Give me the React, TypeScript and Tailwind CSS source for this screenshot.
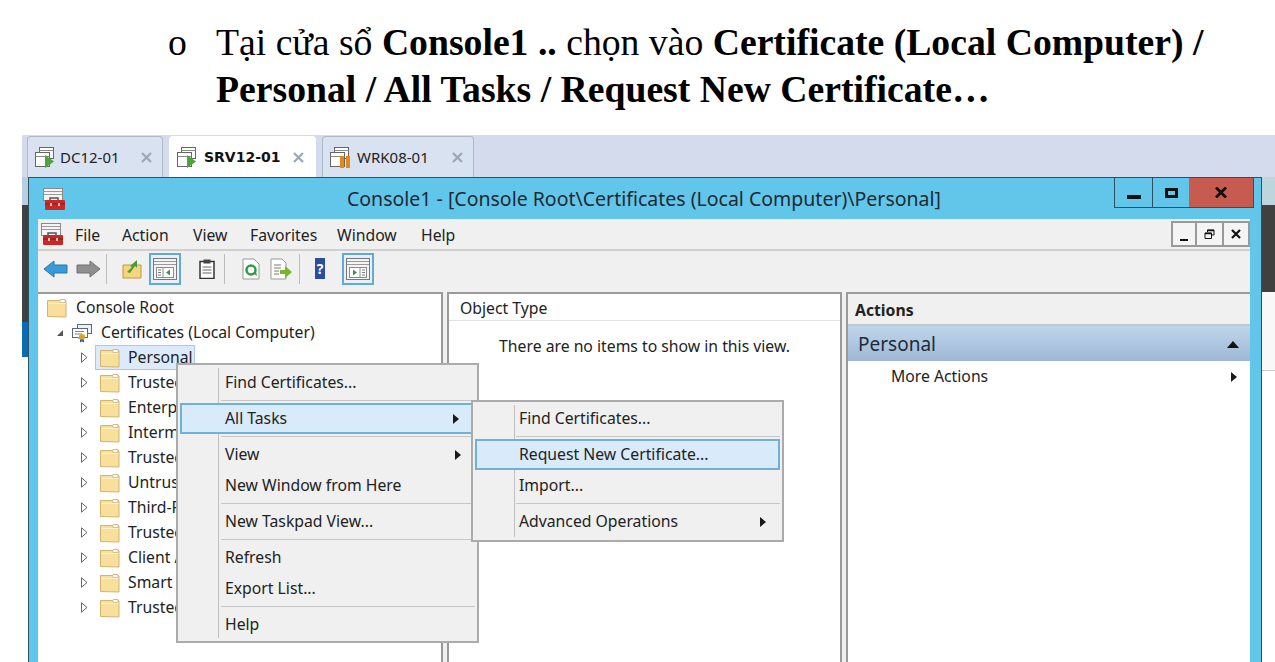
import type { ReactNode } from 'react';

function VmIcon({ state }: { state: 'run' | 'pause' }) {
  return (
    <svg width="24" height="24" viewBox="0 0 24 24" className="shrink-0">
      <rect x="6.5" y="2.5" width="14" height="11" fill="#fff" stroke="#666" />
      <rect x="2.5" y="7.5" width="14" height="14" fill="#fff" stroke="#666" />
      <path d="M2.5 11.5h14M6.5 5.5h14" stroke="#888" />
      {state === 'run' ? (
        <path d="M12 10l9 6.5-9 6.5z" fill="#4aa63a" />
      ) : (
        <path d="M12 11h4v12h-4zM18 11h4v12h-4z" fill="#e08a1e" />
      )}
    </svg>
  );
}

function MmcIcon() {
  return (
    <svg width="24" height="24" viewBox="0 0 24 24" className="shrink-0">
      <rect x="1.5" y="1.5" width="19" height="12" fill="#f4f4f4" stroke="#8a8a8a" />
      <path d="M2 4.5h18M2 7.5h18" stroke="#9a9a9a" />
      <path d="M8 14v-3h8v3" fill="none" stroke="#555" strokeWidth="1.5" />
      <rect x="3" y="13" width="20" height="10" rx="1" fill="#c8282c" />
      <path d="M3 17h20" stroke="#8e1518" />
      <path d="M8 16h2v3H8zM16 16h2v3h-2z" fill="#f2d0a0" />
    </svg>
  );
}

function Folder() {
  return (
    <svg width="20" height="20" viewBox="0 0 20 20" className="shrink-0">
      <path d="M.5 18.5V2.5h12l1-1h4l1.500 1.500v16z" fill="#f8df9c" stroke="#d2b46e" />
      <path d="M1.500 5.500h17" stroke="#fff3cc" />
      <path d="M13 1.500h5v3h-5z" fill="#fff" stroke="#c6b07c" strokeWidth=".7" />
    </svg>
  );
}

function CertStore() {
  return (
    <svg width="22" height="20" viewBox="0 0 22 20" className="shrink-0">
      <rect x="6.500" y="1.500" width="14" height="9" fill="#eef2f6" stroke="#59697a" />
      <rect x="1.500" y="5.500" width="15" height="9" fill="#fff" stroke="#59697a" />
      <path d="M4 8.500h9M4 11h7" stroke="#7a8794" />
      <path d="M7 14h6v2H7z" fill="#9aa6b2" />
      <circle cx="11" cy="14" r="3" fill="#e0a020" />
      <path d="M9 16.500v3l2-1 2 1v-3" fill="#2f62b8" />
    </svg>
  );
}

function Expand() {
  return (
    <svg width="7" height="11" viewBox="0 0 7 11" className="shrink-0">
      <path d="M.5.800l5.500 4.700-5.500 4.700z" fill="#fff" stroke="#666" />
    </svg>
  );
}

function Caret() {
  return (
    <svg width="6" height="10" viewBox="0 0 6 10" className="shrink-0">
      <path d="M0 0l6 5-6 5z" fill="#1a1a1a" />
    </svg>
  );
}

function TabClose() {
  return (
    <svg width="11" height="11" viewBox="0 0 11 11" className="shrink-0">
      <path d="M1 1l9 9M10 1l-9 9" stroke="#9aa7b8" strokeWidth="2.200" />
    </svg>
  );
}

function Tab({ name, state, active, className }: { name: string; state: 'run' | 'pause'; active?: boolean; className: string }) {
  return (
    <div
      className={`flex items-center h-[41px] rounded-t-[4px] border border-b-0 pl-[5px] ${
        active ? 'bg-white border-white' : 'bg-[#d9e2f1] border-[#aeb9cc]'
      } ${className}`}
    >
      <VmIcon state={state} />
      <span
        className={
          active
            ? "flex-1 font-['DejaVu_Sans',sans-serif] text-[14px] font-bold text-[#111]"
            : 'flex-1 text-[15px] text-[#222]'
        }
      >
        {name}
      </span>
      <TabClose />
    </div>
  );
}

function ToolButton({ children, className }: { children: ReactNode; className: string }) {
  return <div className={`flex items-center justify-center shrink-0 ${className}`}>{children}</div>;
}

function PaneToggle({ flip }: { flip?: boolean }) {
  return (
    <svg width="24" height="22" viewBox="0 0 24 22">
      <rect x=".5" y=".5" width="23" height="21" fill="#f4f4f4" stroke="#777" />
      <path d="M1 3.500h22M1 6.500h22" stroke="#999" />
      <rect x="3.500" y="9.500" width="17" height="10" fill="#fff" stroke="#8a8a8a" />
      <path d={flip ? 'M14 10v9' : 'M10 10v9'} stroke="#8a8a8a" />
      <path d={flip ? 'M7 11.500l4 3-4 3z' : 'M17 11.500l-4 3 4 3z'} fill="#2f9a4a" />
      <path d={flip ? 'M16 12h3M16 14.500h3M16 17h3' : 'M5 12h3M5 14.500h3M5 17h3'} stroke="#777" />
    </svg>
  );
}

function TreeRow({ label, active }: { label: string; active?: boolean }) {
  return (
    <div className="flex items-center h-[25px] pl-[43px]">
      <Expand />
      <div
        className={`flex items-center h-[25px] ml-[7px] pl-[4px] pr-[1px] gap-[8px] border whitespace-nowrap ${
          active ? 'bg-[#dcebfb] border-[#a9c9ea]' : 'border-transparent'
        }`}
      >
        <Folder />
        <span>{label}</span>
      </div>
    </div>
  );
}

function MenuItem({ label, arrow, active, pad }: { label: string; arrow?: boolean; active?: boolean; pad: string }) {
  return (
    <div
      className={`relative flex items-center h-[31px] pr-[14px] ${pad} ${
        active ? 'border-2 border-[#6db2dc] bg-[#d9eafb]' : ''
      }`}
    >
      <span className="flex-1">{label}</span>
      {arrow && <Caret />}
    </div>
  );
}

function MenuSep({ className, inset }: { className: string; inset: string }) {
  return (
    <div className={`flex items-center ${className} ${inset}`}>
      <div className="h-px w-full bg-[#c6c6c6]" />
    </div>
  );
}

const treeItems = [
  'Personal',
  'Trusted Root Certification Authorities',
  'Enterprise Trust',
  'Intermediate Certification Authorities',
  'Trusted Publishers',
  'Untrusted Certificates',
  'Third-Party Root Certification Authorities',
  'Trusted People',
  'Client Authentication Issuers',
  'Smart Card Trusted Roots',
  'Trusted Devices',
];

export default function App() {
  return (
    <div className="relative flex flex-col w-[1275px] h-[662px] overflow-hidden bg-white font-['Noto_Sans',sans-serif] text-[15.75px] text-[#222]">
      {/* document text above the screenshot */}
      <div className="flex h-[135px] shrink-0 pl-[168px] pt-[19px] font-['Liberation_Serif',serif] text-[37.7px] leading-[47px] text-black">
        <span className="w-[48px] shrink-0">o</span>
        <p>
          Tại cửa sổ <b>Console1 ..</b> chọn vào <b>Certificate (Local Computer) /</b>
          <br />
          <b>Personal / All Tasks / Request New Certificate…</b>
        </p>
      </div>

      <div className="flex flex-col flex-1 min-h-0 ml-[22px]">
        {/* hypervisor tabs */}
        <div className="flex items-end gap-[6px] h-[42px] shrink-0 pl-[5px] bg-[#d3dbec]">
          <Tab name="DC12-01" state="run" className="w-[136px] gap-[3px] pr-[10px]" />
          <Tab name="SRV12-01" state="run" active className="w-[147px] gap-[5px] pr-[11px]" />
          <Tab name="WRK08-01" state="pause" className="w-[152px] gap-[5px] pr-[10px]" />
        </div>

        <div className="flex flex-1 min-h-0">
          <div className="flex flex-col w-[6px] shrink-0">
            <div className="h-[28px] bg-[#b9cfe0]" />
            <div className="h-[117px] bg-[#404040]" />
            <div className="h-[35px] bg-[#0a6bb5]" />
          </div>

          {/* console window */}
          <div className="flex flex-col w-[1234px] shrink-0 border border-b-0 border-[#2f4f63] bg-[#62c6ea]">
            <div className="relative flex items-center h-[41px] shrink-0 pl-[13px]">
              <MmcIcon />
              <div className="absolute left-[318px] top-[7px] text-[19.5px] leading-[28px] text-[#1c2a33] whitespace-nowrap">
                Console1 - [Console Root\Certificates (Local Computer)\Personal]
              </div>
              <div className="absolute right-[7px] top-0 flex h-[30px] border border-t-0 border-[#2f4f63]">
                <div className="flex items-end justify-center w-[38px] border-r border-[#2f4f63] pb-[8px]">
                  <div className="w-[14px] h-[4px] bg-[#111]" />
                </div>
                <div className="flex items-center justify-center w-[36px]">
                  <div className="w-[13px] h-[10px] border-[3px] border-[#111]" />
                </div>
                <div className="flex items-center justify-center w-[64px] bg-[#c75b50]">
                  <svg width="12" height="11" viewBox="0 0 12 11">
                    <path d="M1 .5l10 10M11 .5l-10 10" stroke="#111" strokeWidth="2.800" />
                  </svg>
                </div>
              </div>
            </div>

            <div className="flex flex-col flex-1 min-h-0 mx-[9px] mr-[11px] bg-[#f0f0f0]">
              {/* menu bar */}
              <div className="flex items-center h-[32px] shrink-0 border-b-2 border-[#cfcfcf] pl-[2px]">
                <MmcIcon />
                <span className="ml-[11px] w-[47px] mt-[3px]">File</span>
                <span className="w-[71px] mt-[3px]">Action</span>
                <span className="w-[57px] mt-[3px]">View</span>
                <span className="w-[87px] mt-[3px]">Favorites</span>
                <span className="w-[84px] mt-[3px]">Window</span>
                <span className="mt-[3px]">Help</span>
                <div className="flex h-[26px] ml-auto bg-[#f4f4f4]">
                  <div className="flex items-end justify-center w-[26px] border-2 border-[#9a9a9a] pb-[4px]">
                    <div className="w-[8px] h-[2px] bg-[#111]" />
                  </div>
                  <div className="flex items-center justify-center w-[27px] border-y-2 border-r-2 border-[#9a9a9a]">
                    <svg width="11" height="11" viewBox="0 0 11 11">
                      <path d="M3.500 3V1h6.500v5H8M1 4h6.500v5.500H1z" fill="none" stroke="#111" />
                      <path d="M3 1.500h7M1 4.500h6.500" stroke="#111" strokeWidth="1.500" />
                    </svg>
                  </div>
                  <div className="flex items-center justify-center w-[26px] border-y-2 border-r-2 border-[#9a9a9a]">
                    <svg width="10" height="10" viewBox="0 0 10 10">
                      <path d="M1 1l8 8M9 1l-8 8" stroke="#111" strokeWidth="2.200" />
                    </svg>
                  </div>
                </div>
              </div>

              {/* toolbar */}
              <div className="flex items-center h-[41px] shrink-0 pl-[6px] pb-[6px]">
                <ToolButton className="w-[24px]">
                  <svg width="24" height="18" viewBox="0 0 24 18">
                    <path d="M0 9l10-8v4h13v8H10v4z" fill="#3b9ad8" stroke="#2478b0" />
                  </svg>
                </ToolButton>
                <ToolButton className="w-[24px] ml-[8px]">
                  <svg width="24" height="18" viewBox="0 0 24 18">
                    <path d="M24 9l-10-8v4H1v8h13v4z" fill="#8f8f8f" stroke="#707070" />
                  </svg>
                </ToolButton>
                <div className="w-px h-[30px] ml-[6px] bg-[#bdbdbd]" />
                <ToolButton className="w-[20px] ml-[15px]">
                  <svg width="20" height="20" viewBox="0 0 20 20">
                    <path d="M1 19V6h18v13z" fill="#f4d67c" stroke="#c09a40" />
                    <path d="M5 13l5-5-2-1 7-6v8l-2-2-5 7z" fill="#4e9a3c" />
                  </svg>
                </ToolButton>
                <ToolButton className="w-[32px] h-[32px] ml-[7px] border-2 border-[#62a9d6] bg-[#e6f1fb]">
                  <PaneToggle />
                </ToolButton>
                <ToolButton className="w-[18px] ml-[17px]">
                  <svg width="16" height="20" viewBox="0 0 16 20">
                    <rect x="1" y="2.500" width="14" height="17" fill="#fff" stroke="#333" strokeWidth="1.500" />
                    <rect x="4.500" y=".5" width="7" height="4" fill="#444" />
                    <path d="M3.500 8h9M3.500 11h9M3.500 14h9" stroke="#666" />
                  </svg>
                </ToolButton>
                <div className="w-px h-[30px] ml-[8px] bg-[#bdbdbd]" />
                <ToolButton className="w-[20px] ml-[16px]">
                  <svg width="20" height="22" viewBox="0 0 20 22">
                    <path d="M2 1h11l5 5v15H2z" fill="#fff" stroke="#999" />
                    <circle cx="10" cy="12" r="4.500" fill="none" stroke="#2f9a4a" strokeWidth="2.500" />
                    <path d="M12 15l4 3-1-5z" fill="#2f9a4a" />
                  </svg>
                </ToolButton>
                <ToolButton className="w-[22px] ml-[9px]">
                  <svg width="22" height="22" viewBox="0 0 22 22">
                    <path d="M1 1h11l4 4v16H1z" fill="#fff" stroke="#999" />
                    <path d="M4 7h7M4 10h7M4 13h5M4 16h5" stroke="#777" />
                    <path d="M10 12h5V8l7 6-7 6v-4h-5z" fill="#76b82a" />
                  </svg>
                </ToolButton>
                <div className="w-px h-[30px] ml-[7px] bg-[#bdbdbd]" />
                <ToolButton className="w-[10px] ml-[15px]">
                  <div className="flex items-center justify-center w-[10px] h-[21px] bg-[#2b4ea0] text-[14px] font-bold leading-none text-white">
                    ?
                  </div>
                </ToolButton>
                <ToolButton className="w-[32px] h-[32px] ml-[17px] border-2 border-[#62a9d6] bg-[#e6f1fb]">
                  <PaneToggle flip />
                </ToolButton>
              </div>

              {/* panes */}
              <div className="flex flex-1 min-h-0">
                <div className="w-[405px] shrink-0 border-t-2 border-r-2 border-[#9a9a9a] bg-white overflow-hidden pt-[1px]">
                  <div className="flex items-center h-[25px] pl-[9px] gap-[9px]">
                    <Folder />
                    <span>Console Root</span>
                  </div>
                  <div className="flex items-center h-[25px] pl-[18px]">
                    <svg width="8" height="8" viewBox="0 0 8 8" className="shrink-0">
                      <path d="M7 1v6H1z" fill="#555" />
                    </svg>
                    <span className="ml-[7px]">
                      <CertStore />
                    </span>
                    <span className="ml-[8px]">Certificates (Local Computer)</span>
                  </div>
                  {treeItems.map((item, i) => (
                    <TreeRow key={item} label={item} active={i === 0} />
                  ))}
                </div>

                <div className="w-[395px] shrink-0 ml-[4px] border-2 border-b-0 border-[#9a9a9a] bg-white">
                  <div className="flex items-center h-[27px] border-b border-[#e2e2e2] pl-[11px] pt-[3px]">Object Type</div>
                  <div className="pt-[14px] text-center">There are no items to show in this view.</div>
                </div>

                <div className="flex-1 min-w-0 ml-[4px] border-l-2 border-t-2 border-[#9a9a9a]">
                  <div className="flex items-center h-[32px] border-b-2 border-[#c8c8c8] pl-[7px] pt-[3px] font-bold">Actions</div>
                  <div className="flex items-center justify-between h-[35px] pl-[10px] pr-[11px] pt-[2px] bg-gradient-to-b from-[#bfd5ec] to-[#9db8d4] text-[19px] text-[#1d2b3a]">
                    Personal
                    <svg width="12" height="7" viewBox="0 0 12 7">
                      <path d="M0 7l6-7 6 7z" fill="#111" />
                    </svg>
                  </div>
                  <div className="flex items-center justify-between h-[33px] pl-[43px] pr-[13px] pb-[2px] bg-white">
                    More Actions
                    <Caret />
                  </div>
                  <div className="h-full bg-white" />
                </div>
              </div>
            </div>
          </div>

          <div className="flex flex-col flex-1 min-w-0">
            <div className="h-[28px] bg-[#bfd5dd]" />
            <div className="h-[87px] bg-[#404040]" />
            <div className="h-[79px] border-b border-[#cccccc] bg-[#f8f8f8]" />
          </div>
        </div>
      </div>

      {/* context menu */}
      <div className="absolute left-[176px] top-[363px] w-[303px] h-[280px] pt-[2px] px-[2px] border-2 border-[#ababab] bg-[#f0f0f0]">
        <div className="absolute left-[40px] top-[3px] bottom-[3px] w-px bg-[#c0c0c0]" />
        <MenuItem label="Find Certificates..." pad="pl-[45px]" />
        <MenuSep className="h-[5px]" inset="pl-[41px]" />
        <MenuItem label="All Tasks" arrow active pad="pl-[43px]" />
        <MenuSep className="h-[5px]" inset="pl-[41px]" />
        <MenuItem label="View" arrow pad="pl-[45px]" />
        <MenuItem label="New Window from Here" pad="pl-[45px]" />
        <MenuSep className="h-[5px]" inset="pl-[41px]" />
        <MenuItem label="New Taskpad View..." pad="pl-[45px]" />
        <MenuSep className="h-[5px]" inset="pl-[41px]" />
        <MenuItem label="Refresh" pad="pl-[45px]" />
        <MenuItem label="Export List..." pad="pl-[45px]" />
        <MenuSep className="h-[5px]" inset="pl-[41px]" />
        <MenuItem label="Help" pad="pl-[45px]" />
      </div>

      {/* all tasks submenu */}
      <div className="absolute left-[471px] top-[400px] w-[313px] h-[142px] pt-[1px] px-[2px] border-2 border-[#ababab] bg-[#f0f0f0]">
        <div className="absolute left-[41px] top-[3px] bottom-[3px] w-px bg-[#c0c0c0]" />
        <MenuItem label="Find Certificates..." pad="pl-[44px]" />
        <MenuSep className="h-[5px]" inset="pl-[41px]" />
        <MenuItem label="Request New Certificate..." active pad="pl-[42px]" />
        <MenuItem label="Import..." pad="pl-[44px]" />
        <MenuSep className="h-[5px]" inset="pl-[41px]" />
        <MenuItem label="Advanced Operations" arrow pad="pl-[44px]" />
      </div>
    </div>
  );
}
